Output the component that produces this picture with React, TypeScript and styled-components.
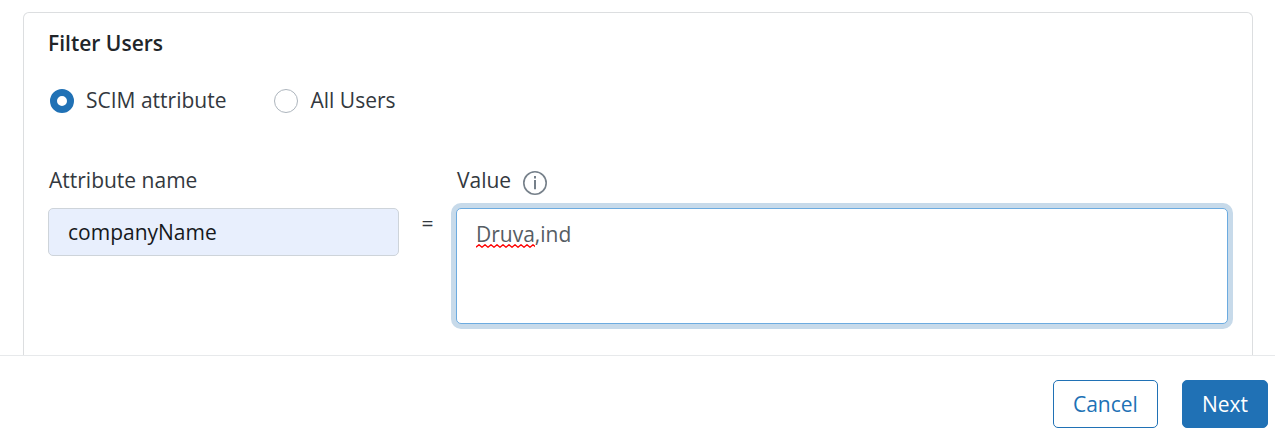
import React, { useState } from "react";
import styled, { createGlobalStyle } from "styled-components";

const GlobalStyle = createGlobalStyle`
  *, *::before, *::after { box-sizing: border-box; }
  body {
    margin: 0;
    background: #fff;
    color: #33383e;
    font-family: "Open Sans", "Noto Sans", sans-serif;
    font-size: 21px;
    line-height: 32px;
  }
  button, input, textarea { font: inherit; }
`;

const Page = styled.main`
  padding-top: 12px;
`;

const Panel = styled.section`
  margin: 0 22px 0 23px;
  padding: 14px 24px 31px;
  border: 1px solid #dcdee0;
  border-bottom: 0;
  border-radius: 6px 6px 0 0;
`;

const Title = styled.h2`
  margin: 0;
  font-size: 21px;
  line-height: 32px;
  font-weight: 600;
  color: #212529;
`;

const RadioRow = styled.div`
  display: flex;
  gap: 48px;
  margin: 25px 0 48px 2px;
`;

const RadioLabel = styled.label`
  display: flex;
  align-items: center;
  gap: 12px;
`;

const Radio = styled.input`
  appearance: none;
  width: 24px;
  height: 24px;
  margin: 2px 0 0;
  border: 1px solid #adb5bd;
  border-radius: 50%;
  background: #fff;

  &:checked {
    border: 7px solid #2071b5;
  }
`;

const Fields = styled.div`
  display: grid;
  grid-template-columns: minmax(0, 5fr) 57px minmax(0, 11fr);
`;

const Field = styled.div`
  display: flex;
  flex-direction: column;
  gap: 12px;
`;

const LabelRow = styled.div`
  display: flex;
  align-items: center;
  gap: 12px;
  height: 32px;
  padding-left: 1px;
`;

const TextInput = styled.input`
  width: 100%;
  height: 48px;
  padding: 0 19px;
  border: 1px solid #ced4da;
  border-radius: 5px;
  background: #e8effd;
  color: #16191c;
  outline: 0;
`;

const Equals = styled.span`
  padding-top: 43px;
  text-align: center;
`;

const AreaWrap = styled.div`
  position: relative;
  display: flex;
`;

const TextArea = styled.textarea`
  width: 100%;
  height: 116px;
  padding: 9px 19px;
  border: 1px solid #6cabe0;
  border-radius: 5px;
  box-shadow: 0 0 0 5px #c7daea;
  background: #fff;
  color: #565d64;
  outline: 0;
  resize: none;
`;

const SpellingMark = styled.svg`
  position: absolute;
  left: 20px;
  top: 36px;
  pointer-events: none;
`;

const InfoButton = styled.button`
  display: flex;
  padding: 5px 0 0;
  border: 0;
  background: none;
  color: #76808a;
`;

const Footer = styled.footer`
  display: flex;
  justify-content: flex-end;
  gap: 24px;
  padding: 24px 7px 14px;
  border-top: 1px solid #e7e9eb;
`;

const Button = styled.button<{ $primary?: boolean }>`
  height: 48px;
  padding: 0 19px;
  border: 1px solid #2071b5;
  border-radius: 5px;
  background: ${(p) => (p.$primary ? "#2071b5" : "#fff")};
  color: ${(p) => (p.$primary ? "#fff" : "#2071b5")};
`;

const squiggle =
  "M0 3.2" + Array.from({ length: 10 }, (_, i) => `L${i * 6 + 3} 0.8L${i * 6 + 6} 3.2`).join("");

export default function App() {
  const [scope, setScope] = useState("scim");
  const [attribute, setAttribute] = useState("companyName");
  const [value, setValue] = useState("Druva,ind");

  return (
    <>
      <GlobalStyle />
      <Page>
        <Panel>
          <Title>Filter Users</Title>
          <RadioRow role="radiogroup" aria-label="Filter Users">
            <RadioLabel>
              <Radio type="radio" name="scope" checked={scope === "scim"} onChange={() => setScope("scim")} />
              SCIM attribute
            </RadioLabel>
            <RadioLabel>
              <Radio type="radio" name="scope" checked={scope === "all"} onChange={() => setScope("all")} />
              All Users
            </RadioLabel>
          </RadioRow>
          <Fields>
            <Field>
              <LabelRow>
                <label htmlFor="attribute">Attribute name</label>
              </LabelRow>
              <TextInput id="attribute" value={attribute} onChange={(e) => setAttribute(e.target.value)} />
            </Field>
            <Equals>=</Equals>
            <Field>
              <LabelRow>
                <label htmlFor="value">Value</label>
                <InfoButton type="button" aria-label="About this value">
                  <svg width="24" height="24" viewBox="0 0 24 24" fill="none" stroke="currentColor">
                    <circle cx="12" cy="12" r="11.2" strokeWidth="1.6" />
                    <path d="M12 9v9.3" strokeWidth="2" />
                    <path d="M12 5v2.4" strokeWidth="2" />
                  </svg>
                </InfoButton>
              </LabelRow>
              <AreaWrap>
                <TextArea id="value" spellCheck={false} value={value} onChange={(e) => setValue(e.target.value)} />
                {value.startsWith("Druva") && (
                  <SpellingMark width="59" height="4" viewBox="0 0 59 4" aria-hidden="true">
                    <path d={squiggle} fill="none" stroke="#f00" strokeWidth="1.4" />
                  </SpellingMark>
                )}
              </AreaWrap>
            </Field>
          </Fields>
        </Panel>
        <Footer>
          <Button type="button">Cancel</Button>
          <Button type="button" $primary>Next</Button>
        </Footer>
      </Page>
    </>
  );
}
